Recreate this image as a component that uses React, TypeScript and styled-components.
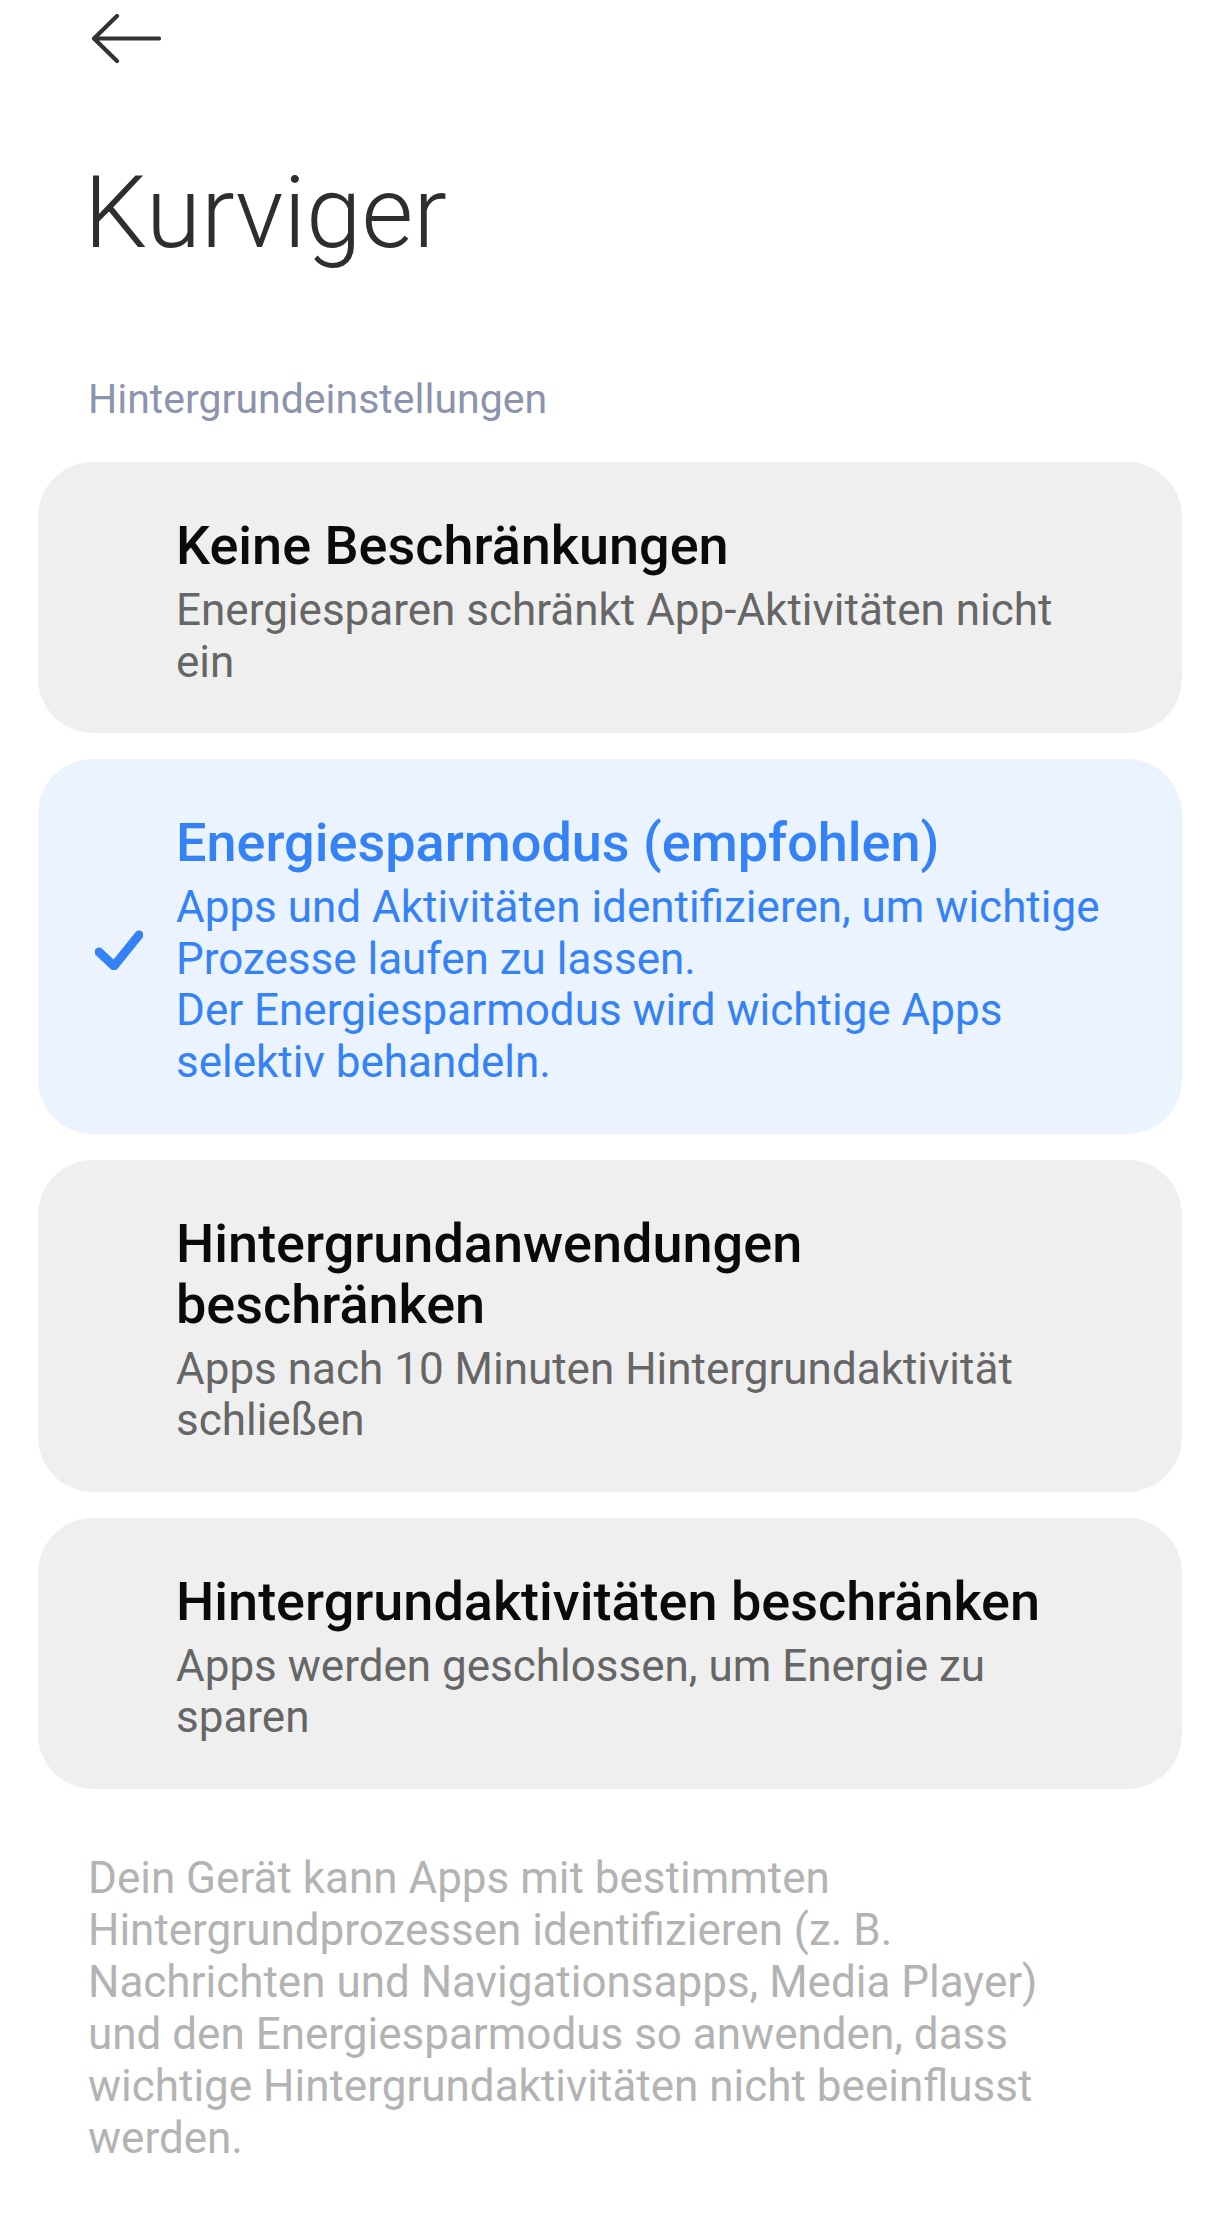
import React from "react";
import styled, { createGlobalStyle } from "styled-components";

const GlobalStyle = createGlobalStyle`
  html, body { margin: 0; padding: 0; background: #ffffff; }
  body { font-family: Roboto, "Noto Sans", "Liberation Sans", sans-serif; }
  * { box-sizing: border-box; }
`;

const Page = styled.div`
  width: 1220px;
  min-height: 2229px;
  background: #ffffff;
  display: flex;
  flex-direction: column;
`;

const TopBar = styled.div`
  height: 77px;
  padding: 14px 0 0 91px;
  display: flex;
  align-items: flex-start;
`;

const BackButton = styled.button`
  border: 0;
  padding: 0;
  background: transparent;
  width: 72px;
  height: 50px;
  display: flex;
  align-items: center;
  justify-content: flex-start;
  color: #333333;
`;

const Title = styled.h1`
  margin: 76px 0 0 84px;
  font-size: 100px;
  line-height: 120px;
  font-weight: 300;
  color: #2e2e2e;
  letter-spacing: 0;
`;

const SectionLabel = styled.div`
  margin: 101px 0 0 88px;
  font-size: 41px;
  line-height: 50px;
  font-weight: 400;
  color: #8c93ad;
`;

const List = styled.div`
  margin: 38px 38px 0 38px;
  display: flex;
  flex-direction: column;
  gap: 26px;
`;

const Card = styled.div<{ $selected?: boolean }>`
  display: grid;
  grid-template-columns: 138px 933px;
  align-items: center;
  border-radius: 55px;
  padding: 53px 0 45px 0;
  background: ${(p) => (p.$selected ? "#eaf3fe" : "#efefef")};
`;

const IconCell = styled.div`
  display: flex;
  align-items: center;
  padding-left: 57px;
  color: #3482f6;
`;

const TextCell = styled.div`
  display: flex;
  flex-direction: column;
`;

const CardTitle = styled.div<{ $selected?: boolean }>`
  font-size: 54px;
  line-height: 61px;
  font-weight: 500;
  color: ${(p) => (p.$selected ? "#3482f6" : "#0a0a0a")};
`;

const CardSub = styled.div<{ $selected?: boolean }>`
  margin-top: 9px;
  font-size: 44px;
  line-height: 51.6px;
  font-weight: 400;
  color: ${(p) => (p.$selected ? "#3482f6" : "#666666")};
`;

const Footer = styled.p`
  margin: 63px 0 0 88px;
  max-width: 990px;
  font-size: 44px;
  line-height: 52px;
  font-weight: 400;
  color: #b3b3b3;
`;

const ArrowIcon = () => (
  <svg width="70" height="50" viewBox="0 0 70 50" fill="none">
    <path
      d="M68 24.5H3M26 2L3 24.5L26 47"
      stroke="currentColor"
      strokeWidth="4.2"
      strokeLinecap="round"
      strokeLinejoin="round"
    />
  </svg>
);

const CheckIcon = () => (
  <svg width="48" height="40" viewBox="0 0 48 40" fill="none">
    <path
      d="M4 22L19 36L44 5"
      stroke="currentColor"
      strokeWidth="9"
      strokeLinecap="round"
      strokeLinejoin="round"
    />
  </svg>
);

type Option = {
  title: string;
  sub: React.ReactNode;
  selected?: boolean;
};

const options: Option[] = [
  {
    title: "Keine Beschränkungen",
    sub: "Energiesparen schränkt App-Aktivitäten nicht ein",
  },
  {
    title: "Energiesparmodus (empfohlen)",
    sub: (
      <>
        Apps und Aktivitäten identifizieren, um wichtige Prozesse laufen zu lassen.
        <br />
        Der Energiesparmodus wird wichtige Apps selektiv behandeln.
      </>
    ),
    selected: true,
  },
  {
    title: "Hintergrundanwendungen beschränken",
    sub: "Apps nach 10 Minuten Hintergrundaktivität schließen",
  },
  {
    title: "Hintergrundaktivitäten beschränken",
    sub: "Apps werden geschlossen, um Energie zu sparen",
  },
];

export default function App() {
  return (
    <Page>
      <GlobalStyle />
      <TopBar>
        <BackButton aria-label="Zurück">
          <ArrowIcon />
        </BackButton>
      </TopBar>
      <Title>Kurviger</Title>
      <SectionLabel>Hintergrundeinstellungen</SectionLabel>
      <List>
        {options.map((o) => (
          <Card key={o.title} $selected={o.selected}>
            <IconCell>{o.selected ? <CheckIcon /> : null}</IconCell>
            <TextCell>
              <CardTitle $selected={o.selected}>{o.title}</CardTitle>
              <CardSub $selected={o.selected}>{o.sub}</CardSub>
            </TextCell>
          </Card>
        ))}
      </List>
      <Footer>
        Dein Gerät kann Apps mit bestimmten Hintergrundprozessen identifizieren (z. B.
        Nachrichten und Navigationsapps, Media Player) und den Energiesparmodus so
        anwenden, dass wichtige Hintergrundaktivitäten nicht beeinflusst werden.
      </Footer>
    </Page>
  );
}
